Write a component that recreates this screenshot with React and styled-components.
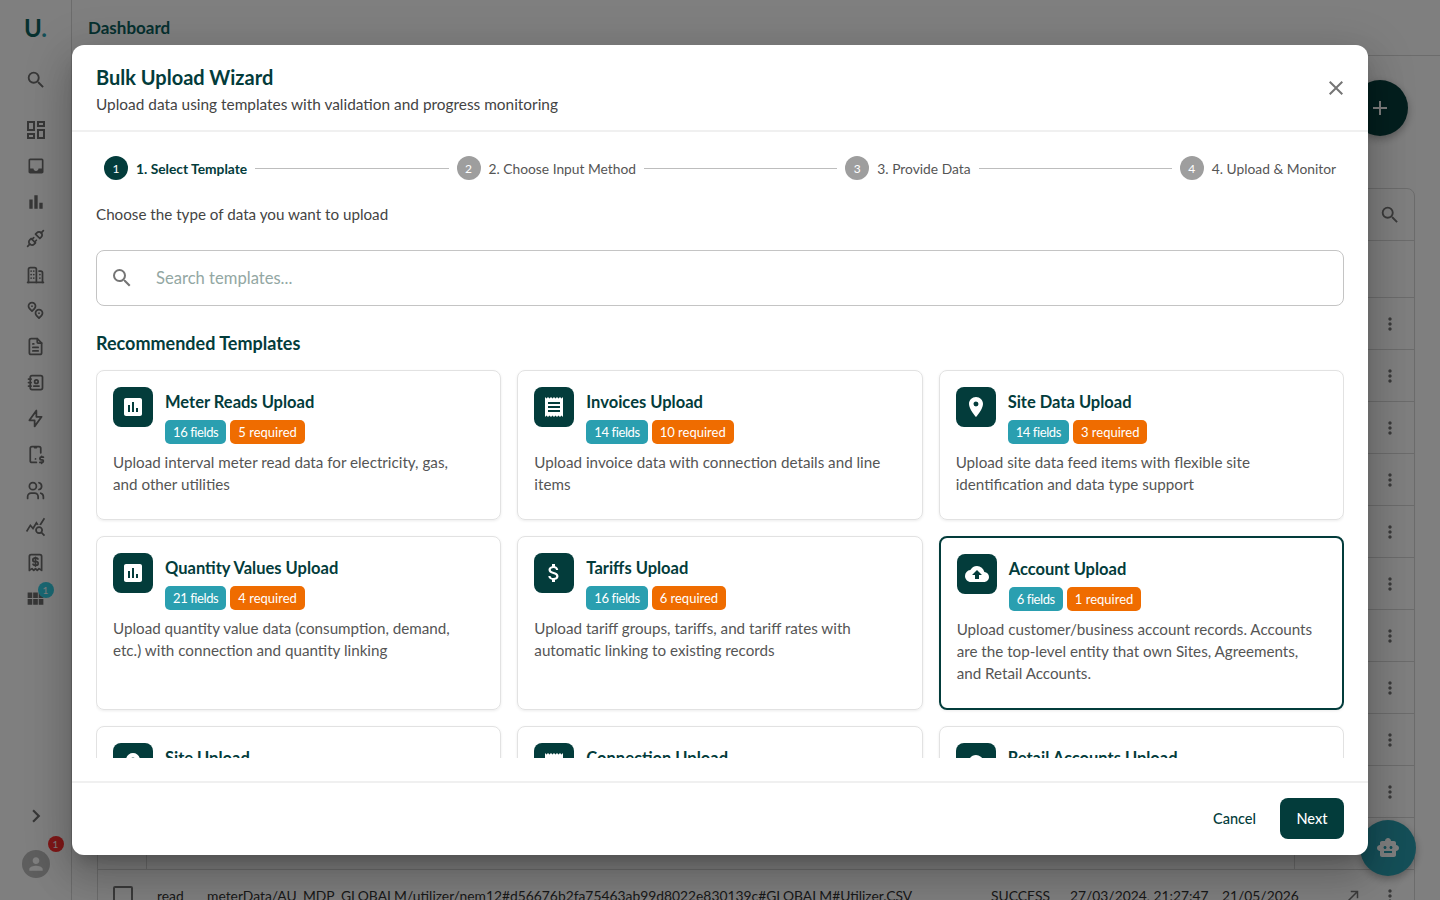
import React from "react";
import styled, { createGlobalStyle } from "styled-components";
import {
  MdAdd,
  MdAssessment,
  MdAttachMoney,
  MdBarChart,
  MdChevronRight,
  MdClose,
  MdCloudUpload,
  MdInbox,
  MdLocationOn,
  MdMoreVert,
  MdNorthEast,
  MdOutlineDashboard,
  MdOutlineQueryStats,
  MdPerson,
  MdReceipt,
  MdSearch,
  MdSmartToy,
  MdViewModule,
} from "react-icons/md";
import {
  TbAddressBook,
  TbBolt,
  TbBuildings,
  TbDeviceMobileDollar,
  TbFileText,
  TbMapPins,
  TbPlugConnected,
  TbReceiptDollar,
  TbUsers,
} from "react-icons/tb";

const DARK = "#033c3b";
const FONT = `Lato, "Noto Sans", sans-serif`;

const navItems = [
  [MdOutlineDashboard, 24],
  [MdInbox, 20],
  [MdBarChart, 20],
  [TbPlugConnected, 21],
  [TbBuildings, 21],
  [TbMapPins, 21],
  [TbFileText, 21],
  [TbAddressBook, 21],
  [TbBolt, 21],
  [TbDeviceMobileDollar, 21],
  [TbUsers, 21],
  [MdOutlineQueryStats, 21],
  [TbReceiptDollar, 21],
  [MdViewModule, 21],
];

const steps = [
  "1. Select Template",
  "2. Choose Input Method",
  "3. Provide Data",
  "4. Upload & Monitor",
];

const templates = [
  {
    icon: MdAssessment,
    title: "Meter Reads Upload",
    fields: 16,
    required: 5,
    text: "Upload interval meter read data for electricity, gas, and other utilities",
  },
  {
    icon: MdReceipt,
    title: "Invoices Upload",
    fields: 14,
    required: 10,
    text: "Upload invoice data with connection details and line items",
  },
  {
    icon: MdLocationOn,
    title: "Site Data Upload",
    fields: 14,
    required: 3,
    text: "Upload site data feed items with flexible site identification and data type support",
  },
  {
    icon: MdAssessment,
    title: "Quantity Values Upload",
    fields: 21,
    required: 4,
    text: "Upload quantity value data (consumption, demand, etc.) with connection and quantity linking",
  },
  {
    icon: MdAttachMoney,
    title: "Tariffs Upload",
    fields: 16,
    required: 6,
    text: "Upload tariff groups, tariffs, and tariff rates with automatic linking to existing records",
  },
  {
    icon: MdCloudUpload,
    title: "Account Upload",
    fields: 6,
    required: 1,
    selected: true,
    text: "Upload customer/business account records. Accounts are the top-level entity that own Sites, Agreements, and Retail Accounts.",
  },
  { icon: MdLocationOn, title: "Site Upload", fields: 12, required: 2, text: "" },
  { icon: MdReceipt, title: "Connection Upload", fields: 12, required: 2, text: "" },
  { icon: MdCloudUpload, title: "Retail Accounts Upload", fields: 12, required: 2, text: "" },
];

const GlobalStyle = createGlobalStyle`
  html, body {
    margin: 0;
    padding: 0;
    background: #fff;
    font-family: ${FONT};
  }
`;

const Page = styled.div`
  position: relative;
  display: flex;
  width: 1440px;
  height: 900px;
  overflow: hidden;
`;

const Sidebar = styled.aside`
  width: 71px;
  flex-shrink: 0;
  height: 100%;
  border-right: 1px solid #d8d8d8;
  display: flex;
  flex-direction: column;
  align-items: center;
  color: #6e6e6e;
`;

const Logo = styled.div`
  height: 56px;
  margin-bottom: 6px;
  line-height: 56px;
  font-size: 24px;
  font-weight: 700;
  color: #0d625f;
  span {
    color: #2a9fb0;
  }
`;

const NavButton = styled.div`
  position: relative;
  width: 36px;
  height: 36px;
  flex-shrink: 0;
  display: flex;
  align-items: center;
  justify-content: center;
`;

const NavList = styled.nav`
  margin-top: 14px;
  display: flex;
  flex-direction: column;
`;

const Badge = styled.span`
  position: absolute;
  top: ${(p) => p.$top}px;
  left: ${(p) => p.$left}px;
  width: 16px;
  height: 16px;
  border-radius: 50%;
  background: ${(p) => p.$color};
  color: #fff;
  font-size: 10px;
  line-height: 16px;
  text-align: center;
`;

const SidebarFoot = styled.div`
  margin-top: auto;
  padding-bottom: 22px;
  display: flex;
  flex-direction: column;
  align-items: center;
  gap: 21px;
`;

const Avatar = styled.div`
  position: relative;
  width: 28px;
  height: 28px;
  border-radius: 50%;
  background: #bdbdbd;
  color: #fff;
  display: flex;
  align-items: center;
  justify-content: center;
`;

const Main = styled.main`
  flex: 1;
  min-width: 0;
  display: flex;
  flex-direction: column;
`;

const TopBar = styled.header`
  height: 55px;
  flex-shrink: 0;
  border-bottom: 1px solid #d8d8d8;
  padding-left: 16px;
  display: flex;
  align-items: center;
  font-size: 17px;
  font-weight: 700;
  color: #0d625f;
`;

const Content = styled.div`
  padding: 132px 25px 0 25px;
`;

const TableCard = styled.section`
  border: 1px solid #d8d8d8;
  border-radius: 8px 8px 0 0;
  color: #222;
  font-size: 13.85px;
`;

const TableTools = styled.div`
  height: 51px;
  padding-right: 13px;
  display: flex;
  align-items: center;
  justify-content: flex-end;
  color: #757575;
`;

const TableHead = styled.div`
  height: 56px;
  border-top: 1px solid #d8d8d8;
`;

const Row = styled.div`
  height: 51px;
  border-top: 1px solid #d8d8d8;
  display: grid;
  grid-template-columns: 49px 60px 784px 79px 152px 73px 76px 1fr;
  align-items: center;
  color: #333;
`;

const Cell = styled.div`
  height: 100%;
  box-sizing: border-box;
  display: flex;
  align-items: center;
  white-space: nowrap;
  padding-left: ${(p) => p.$pad || 0}px;
  justify-content: ${(p) => (p.$center ? "center" : "flex-start")};
  color: ${(p) => p.$color || "inherit"};
  border-right: ${(p) => (p.$ruled ? "1px solid #d8d8d8" : "none")};
`;

const CheckBox = styled.span`
  width: 16px;
  height: 16px;
  border: 2px solid #757575;
  border-radius: 2px;
`;

const Fab = styled.div`
  position: absolute;
  width: 56px;
  height: 56px;
  border-radius: 50%;
  display: flex;
  align-items: center;
  justify-content: center;
  color: #fff;
  background: ${(p) => p.$color};
  top: ${(p) => p.$top}px;
  right: ${(p) => p.$right}px;
  box-shadow: 0 3px 8px rgba(0, 0, 0, 0.3);
`;

const Backdrop = styled.div`
  position: absolute;
  inset: 0;
  background: rgba(0, 0, 0, 0.5);
  display: flex;
  align-items: center;
  justify-content: center;
`;

const Modal = styled.div`
  width: 90%;
  height: 90%;
  background: #fff;
  border-radius: 12px;
  display: flex;
  flex-direction: column;
  overflow: hidden;
  box-shadow: 0 11px 15px -7px rgba(0, 0, 0, 0.2), 0 24px 38px 3px rgba(0, 0, 0, 0.14),
    0 9px 46px 8px rgba(0, 0, 0, 0.12);
`;

const ModalHead = styled.div`
  height: 85px;
  flex-shrink: 0;
  border-bottom: 2px solid #f0f0f0;
  padding: 0 20px 0 24px;
  display: flex;
  align-items: center;
  justify-content: space-between;
`;

const TitleBlock = styled.div`
  padding-top: 4px;
`;

const Title = styled.h2`
  margin: 0;
  font-size: 20px;
  line-height: 28px;
  font-weight: 700;
  color: ${DARK};
`;

const Subtitle = styled.p`
  margin: 0;
  font-size: 15.4px;
  line-height: 26px;
  color: #444;
`;

const CloseButton = styled.button`
  border: 0;
  background: none;
  padding: 0;
  width: 24px;
  height: 24px;
  color: #757575;
  cursor: pointer;
`;

const ModalBody = styled.div`
  flex: 1;
  min-height: 0;
  padding: 24px 24px 23px;
  display: flex;
  flex-direction: column;
`;

const Stepper = styled.ol`
  margin: 0;
  padding: 0;
  list-style: none;
  display: flex;
  align-items: center;
  height: 24px;
  flex-shrink: 0;
`;

const Step = styled.li`
  display: flex;
  align-items: center;
  gap: 8px;
  padding: 0 8px;
  flex-shrink: 0;
  font-size: 13.8px;
  font-weight: ${(p) => (p.$active ? 700 : 400)};
  color: ${(p) => (p.$active ? DARK : "#555")};
`;

const StepDot = styled.span`
  width: 24px;
  height: 24px;
  border-radius: 50%;
  background: ${(p) => (p.$active ? DARK : "#9e9e9e")};
  color: #fff;
  font-size: 12px;
  font-weight: 400;
  display: flex;
  align-items: center;
  justify-content: center;
`;

const Connector = styled.span`
  flex: 1;
  height: 1px;
  background: #bdbdbd;
`;

const Scroller = styled.div`
  flex: 1;
  min-height: 0;
  overflow: hidden;
`;

const Lead = styled.p`
  margin: 21px 0 0;
  font-size: 15.2px;
  line-height: 26px;
  color: #444;
`;

const SearchBox = styled.label`
  margin-top: 23px;
  height: 56px;
  box-sizing: border-box;
  border: 1px solid #c4c4c4;
  border-radius: 8px;
  padding: 0 13px;
  display: flex;
  align-items: center;
  gap: 22px;
  color: #757575;
`;

const SearchInput = styled.input`
  flex: 1;
  border: 0;
  outline: 0;
  padding: 0;
  background: none;
  font-family: ${FONT};
  font-size: 16.6px;
  color: #333;
  &::placeholder {
    color: #93a7a3;
    opacity: 1;
  }
`;

const SectionTitle = styled.h3`
  margin: 24px 0 0;
  font-size: 18px;
  line-height: 26px;
  font-weight: 700;
  color: ${DARK};
`;

const CardGrid = styled.div`
  margin-top: 13.5px;
  display: grid;
  grid-template-columns: repeat(3, 1fr);
  gap: 16px;
`;

const Card = styled.article`
  border: ${(p) => (p.$selected ? `2px solid ${DARK}` : "1px solid #e2e2e2")};
  border-radius: 8px;
  padding: 16px 16px 24px;
  box-shadow: 0 1px 3px rgba(0, 0, 0, 0.08);
`;

const CardTop = styled.div`
  display: flex;
  gap: 12px;
`;

const IconTile = styled.div`
  width: 40px;
  height: 40px;
  flex-shrink: 0;
  border-radius: 8px;
  background: ${DARK};
  color: #fff;
  display: flex;
  align-items: center;
  justify-content: center;
`;

const CardTitle = styled.h4`
  margin: 0;
  font-size: 16.5px;
  line-height: 30px;
  font-weight: 700;
  color: ${DARK};
`;

const ChipRow = styled.div`
  margin-top: 3px;
  display: flex;
  gap: 4px;
`;

const Chip = styled.span`
  height: 24px;
  padding: 0 8px;
  border-radius: 5px;
  background: #ef6c00;
  color: #fff;
  font-size: 13px;
  line-height: 24px;
`;

const FieldsChip = styled(Chip)`
  background: #2a9fb0;
  letter-spacing: -0.4px;
`;

const CardText = styled.p`
  margin: 7px 0 0;
  max-width: 360px;
  font-size: 15.2px;
  line-height: 22px;
  color: #555;
`;

const ModalFoot = styled.div`
  height: 71px;
  flex-shrink: 0;
  border-top: 2px solid #f0f0f0;
  padding: 0 24px 1px 0;
  box-sizing: content-box;
  display: flex;
  align-items: center;
  justify-content: flex-end;
  gap: 8px;
`;

const TextButton = styled.button`
  border: 0;
  background: none;
  height: 41px;
  padding: 0 16px;
  font-family: ${FONT};
  font-size: 14.5px;
  font-weight: 500;
  color: ${DARK};
`;

const PrimaryButton = styled.button`
  border: 0;
  width: 64px;
  height: 41px;
  border-radius: 8px;
  background: ${DARK};
  color: #fff;
  font-family: ${FONT};
  font-size: 14.5px;
  font-weight: 500;
`;

const App = () => {
  const rows = Array.from({ length: 12 });

  return (
    <Page>
      <GlobalStyle />
      <Sidebar>
        <Logo>
          U<span>.</span>
        </Logo>
        <NavButton>
          <MdSearch size={22} />
        </NavButton>
        <NavList>
          {navItems.map(([Icon, size], i) => (
            <NavButton key={i}>
              <Icon size={size} />
              {i === navItems.length - 1 && (
                <Badge $top={2} $left={20} $color="#35d0e6">
                  1
                </Badge>
              )}
            </NavButton>
          ))}
        </NavList>
        <SidebarFoot>
          <MdChevronRight size={26} />
          <Avatar>
            <MdPerson size={20} />
            <Badge $top={-14} $left={26} $color="#ff2e2e">
              1
            </Badge>
          </Avatar>
        </SidebarFoot>
      </Sidebar>

      <Main>
        <TopBar>Dashboard</TopBar>
        <Content>
          <TableCard>
            <TableTools>
              <MdSearch size={22} />
            </TableTools>
            <TableHead />
            {rows.map((_, i) => (
              <Row key={i}>
                <Cell $center $ruled={i === 10}>
                  {i === 11 && <CheckBox />}
                </Cell>
                <Cell $pad={10}>{i === 11 && "read"}</Cell>
                <Cell>
                  {i === 11 &&
                    "meterData/AU_MDP_GLOBALM/utilizer/nem12#d56676b2fa75463ab99d8022e830139c#GLOBALM#Utilizer.CSV"}
                </Cell>
                <Cell>{i === 11 && "SUCCESS"}</Cell>
                <Cell>{i === 11 && "27/03/2024, 21:27:47"}</Cell>
                <Cell $ruled={i === 10}>{i === 11 && "21/05/2026"}</Cell>
                <Cell $pad={49} $color="#757575">
                  {i === 11 && <MdNorthEast size={18} />}
                </Cell>
                <Cell $pad={9} $color="#757575">
                  <MdMoreVert size={20} />
                </Cell>
              </Row>
            ))}
          </TableCard>
        </Content>
      </Main>

      <Fab $color="#083f3d" $top={80} $right={32}>
        <MdAdd size={24} />
      </Fab>
      <Fab $color="#2a9fb0" $top={820} $right={24}>
        <MdSmartToy size={24} />
      </Fab>

      <Backdrop>
        <Modal>
          <ModalHead>
            <TitleBlock>
              <Title>Bulk Upload Wizard</Title>
              <Subtitle>Upload data using templates with validation and progress monitoring</Subtitle>
            </TitleBlock>
            <CloseButton aria-label="Close">
              <MdClose size={24} />
            </CloseButton>
          </ModalHead>

          <ModalBody>
            <Stepper>
              {steps.map((label, i) => (
                <React.Fragment key={label}>
                  {i > 0 && <Connector />}
                  <Step $active={i === 0}>
                    <StepDot $active={i === 0}>{i + 1}</StepDot>
                    {label}
                  </Step>
                </React.Fragment>
              ))}
            </Stepper>
            <Scroller>
              <Lead>Choose the type of data you want to upload</Lead>
              <SearchBox>
                <MdSearch size={24} />
                <SearchInput placeholder="Search templates..." />
              </SearchBox>
              <SectionTitle>Recommended Templates</SectionTitle>
              <CardGrid>
                {templates.map((t) => (
                  <Card key={t.title} $selected={t.selected}>
                    <CardTop>
                      <IconTile>
                        <t.icon size={24} />
                      </IconTile>
                      <div>
                        <CardTitle>{t.title}</CardTitle>
                        <ChipRow>
                          <FieldsChip>{t.fields} fields</FieldsChip>
                          <Chip>{t.required} required</Chip>
                        </ChipRow>
                      </div>
                    </CardTop>
                    <CardText>{t.text}</CardText>
                  </Card>
                ))}
              </CardGrid>
            </Scroller>
          </ModalBody>

          <ModalFoot>
            <TextButton>Cancel</TextButton>
            <PrimaryButton>Next</PrimaryButton>
          </ModalFoot>
        </Modal>
      </Backdrop>
    </Page>
  );
};

export default App;
